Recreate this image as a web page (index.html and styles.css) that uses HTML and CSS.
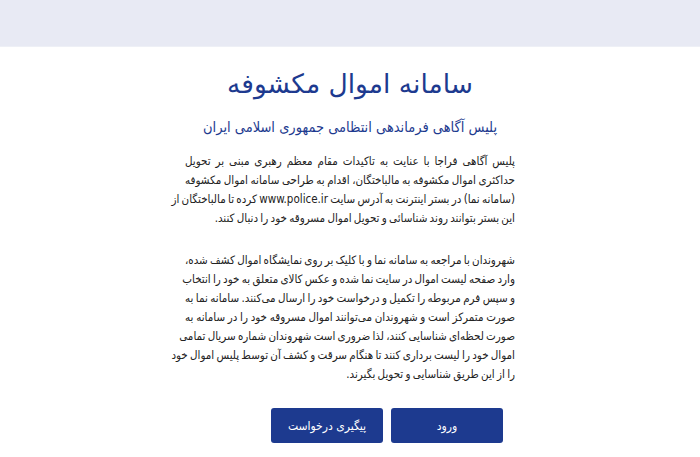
FILE: index.html
```html
<!DOCTYPE html>
<html lang="fa" dir="rtl">
<head>
<meta charset="utf-8">
<link rel="stylesheet" href="styles.css">
</head>
<body>
<header class="topbar"></header>
<main class="content">
  <h1 class="title">سامانه اموال مکشوفه</h1>
  <h2 class="subtitle">پلیس آگاهی فرماندهی انتظامی جمهوری اسلامی ایران</h2>
  <p class="para">
    <span class="line">پلیس آگاهی فراجا با عنایت به تاکیدات مقام معظم رهبری مبنی بر تحویل</span>
    <span class="line">حداکثری اموال مکشوفه به مالباختگان، اقدام به طراحی سامانه اموال مکشوفه</span>
    <span class="line">(سامانه نما) در بستر اینترنت به آدرس سایت www.police.ir کرده تا مالباختگان از</span>
    <span class="line last">این بستر بتوانند روند شناسائی و تحویل اموال مسروقه خود را دنبال کنند.</span>
  </p>
  <p class="para para-second">
    <span class="line">شهروندان با مراجعه به سامانه نما و با کلیک بر روی نمایشگاه اموال کشف شده،</span>
    <span class="line">وارد صفحه لیست اموال در سایت نما شده و عکس کالای متعلق به خود را انتخاب</span>
    <span class="line">و سپس فرم مربوطه را تکمیل و درخواست خود را ارسال می‌کنند. سامانه نما به</span>
    <span class="line">صورت متمرکز است و شهروندان می‌توانند اموال مسروقه خود را در سامانه به</span>
    <span class="line">صورت لحظه‌ای شناسایی کنند، لذا ضروری است شهروندان شماره سریال تمامی</span>
    <span class="line">اموال خود را لیست برداری کنند تا هنگام سرقت و کشف آن توسط پلیس اموال خود</span>
    <span class="line last">را از این طریق شناسایی و تحویل بگیرند.</span>
  </p>
  <div class="actions">
    <button class="btn">ورود</button>
    <button class="btn">پیگیری درخواست</button>
  </div>
</main>
</body>
</html>
```
FILE: styles.css
```css
html, body {
  margin: 0;
  padding: 0;
  background: #ffffff;
  font-family: "DejaVu Sans", "Noto Sans", sans-serif;
}
.topbar {
  height: 46px;
  background: #e8eaf4;
  border-bottom: 1px solid #eef0f6;
}
.content {
  width: 330px;
  margin: 0 auto;
  padding-top: 19px;
}
.title {
  margin: 0;
  text-align: center;
  font-size: 26.5px;
  font-weight: 500;
  color: #1d3a8f;
  line-height: 36px;
}
.subtitle {
  margin: 13px 0 0;
  text-align: center;
  font-family: "DejaVu Sans Condensed", "DejaVu Sans", sans-serif;
  font-stretch: condensed;
  font-size: 14.5px;
  font-weight: normal;
  color: #1d3a8f;
  line-height: 24px;
}
.para {
  margin: 13px 0 0;
  font-family: "DejaVu Sans Condensed", "DejaVu Sans", sans-serif;
  font-stretch: condensed;
  font-size: 11.5px;
  word-spacing: -1px;
  line-height: 19px;
  color: #222;
}
.line {
  display: block;
  white-space: nowrap;
  text-align: justify;
  text-align-last: justify;
}
.line.last {
  text-align-last: right;
}
.para-second {
  margin-top: 23px;
}
.actions {
  display: flex;
  justify-content: flex-start;
  gap: 8px;
  padding-right: 12px;
  margin-top: 24px;
}
.btn {
  width: 112px;
  height: 35px;
  border: none;
  border-radius: 3px;
  background: #1d3a8f;
  color: #fff;
  font-family: "DejaVu Sans Condensed", "DejaVu Sans", sans-serif;
  font-stretch: condensed;
  font-size: 12px;
}
```
